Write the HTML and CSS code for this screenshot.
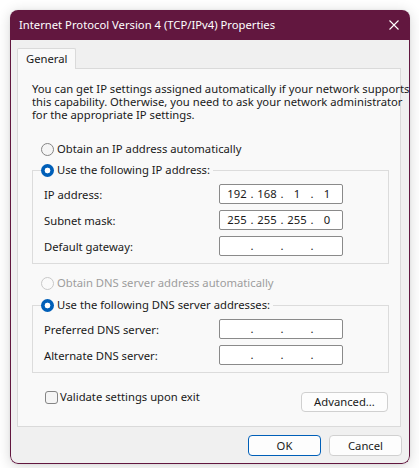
FILE: index.html
```html
<!DOCTYPE html>
<html>
<head>
<meta charset="utf-8">
<link rel="stylesheet" href="styles.css">
</head>
<body>
<div class="window">
  <div class="titlebar">
    <span class="title">Internet Protocol Version 4 (TCP/IPv4) Properties</span>
    <svg class="close" width="10" height="10" viewBox="0 0 10 10"><path d="M0.5 0.5L9.5 9.5M9.5 0.5L0.5 9.5" stroke="#fff" stroke-width="1.1" fill="none"/></svg>
  </div>
  <div class="client">
    <div class="tabs"><div class="tab">General</div></div>
    <div class="panel">
      <p class="intro">You can get IP settings assigned automatically if your network supports<br>this capability. Otherwise, you need to ask your network administrator<br>for the appropriate IP settings.</p>
      <label class="radio top-radio"><span class="rb"></span>Obtain an IP address automatically</label>
      <fieldset class="group g1">
        <legend><label class="radio"><span class="rb on"></span>Use the following IP address:</label></legend>
        <div class="row"><span>IP address:</span><div class="ip"><span class="seg">192</span><span class="dot">.</span><span class="seg">168</span><span class="dot">.</span><span class="seg">1</span><span class="dot">.</span><span class="seg">1</span></div></div>
        <div class="row"><span>Subnet mask:</span><div class="ip"><span class="seg">255</span><span class="dot">.</span><span class="seg">255</span><span class="dot">.</span><span class="seg">255</span><span class="dot">.</span><span class="seg">0</span></div></div>
        <div class="row"><span>Default gateway:</span><div class="ip"><span class="seg"></span><span class="dot">.</span><span class="seg"></span><span class="dot">.</span><span class="seg"></span><span class="dot">.</span><span class="seg"></span></div></div>
      </fieldset>
      <label class="radio dns-radio disabled"><span class="rb"></span>Obtain DNS server address automatically</label>
      <fieldset class="group g2">
        <legend><label class="radio"><span class="rb on"></span>Use the following DNS server addresses:</label></legend>
        <div class="row"><span>Preferred DNS server:</span><div class="ip"><span class="seg"></span><span class="dot">.</span><span class="seg"></span><span class="dot">.</span><span class="seg"></span><span class="dot">.</span><span class="seg"></span></div></div>
        <div class="row"><span>Alternate DNS server:</span><div class="ip"><span class="seg"></span><span class="dot">.</span><span class="seg"></span><span class="dot">.</span><span class="seg"></span><span class="dot">.</span><span class="seg"></span></div></div>
      </fieldset>
      <div class="bottom-row">
        <label class="check"><span class="cb"></span>Validate settings upon exit</label>
        <button class="btn advanced">Advanced...</button>
      </div>
    </div>
    <div class="footer">
      <button class="btn ok">OK</button>
      <button class="btn cancel">Cancel</button>
    </div>
  </div>
</div>
</body>
</html>
```
FILE: styles.css
```css
* { box-sizing: border-box; }
html, body { margin: 0; padding: 0; }
body {
  background: #ffffff;
  font-family: "Noto Sans", "Open Sans", sans-serif;
  font-size: 11.25px;
  color: #1a1a1a;
  width: 419px;
  height: 468px;
  overflow: hidden;
}
.window {
  margin: 10px 0 0 10px;
  width: 400px;
  height: 454px;
  border-radius: 8px;
  overflow: hidden;
  box-shadow: 0 2px 14px rgba(0,0,0,0.16), 0 0 2px rgba(0,0,0,0.1);
  display: flex;
  flex-direction: column;
}
.titlebar {
  height: 30px;
  flex: none;
  background: #62173f;
  color: #fff;
  display: flex;
  align-items: center;
  justify-content: space-between;
  padding: 0 11px 0 9px;
}
.title { font-size: 11.25px; line-height: 16px; }
.close { display: block; }
.client {
  flex: 1;
  background: #f0f0f0;
  border: 1px solid #62173f;
  border-top: none;
  border-radius: 0 0 8px 8px;
  padding: 8px 8px 0 6px;
  display: flex;
  flex-direction: column;
}
.tabs { display: flex; }
.tab {
  position: relative;
  z-index: 1;
  height: 21px;
  margin-bottom: -1px;
  padding: 0 8px;
  background: #f9f9f9;
  border: 1px solid #dadada;
  border-bottom: none;
  line-height: 19px;
  border-radius: 2px 2px 0 0;
}
.panel {
  height: 359px;
  background: #f9f9f9;
  border: 1px solid #dadada;
  padding: 13px 11px 14px 14px;
  display: flex;
  flex-direction: column;
  align-items: flex-start;
}
.intro {
  margin: 0;
  line-height: 13px;
  white-space: nowrap;
}
.radio {
  display: flex;
  align-items: center;
  height: 16px;
  line-height: 16px;
  white-space: nowrap;
}
.top-radio { margin: 20px 0 0 9px; }
.dns-radio { margin: 11px 0 0 9px; }
.rb {
  width: 13px;
  height: 13px;
  border-radius: 50%;
  border: 1px solid #858585;
  background: #f5f5f5;
  margin-right: 3px;
  flex: none;
}
.rb.on {
  border: none;
  background: radial-gradient(circle, #ffffff 0 2.6px, #005fb8 3.2px);
}
.disabled { color: #9d9d9d; }
.disabled .rb { border-color: #c8c8c8; background: #fafafa; }
.group {
  width: 357px;
  margin: 0;
  border: 1px solid #dcdcdc;
  padding: 6px 45px 7px 11px;
  display: flex;
  flex-direction: column;
  gap: 6px;
}
.g1 { margin-top: 5px; }
.g2 { margin-top: 6px; padding-top: 6px; }
.group legend {
  padding: 0 3px 0 0;
  margin-left: -3px;
}
.row {
  display: flex;
  justify-content: space-between;
  align-items: center;
  height: 20px;
}
.ip {
  width: 124px;
  height: 20px;
  background: #fff;
  border: 1px solid #8a8a8a;
  border-radius: 2px;
  display: flex;
  align-items: center;
  padding-left: 4px;
  line-height: 16px;
}
.seg { width: 26px; text-align: center; }
.dot { width: 4px; text-align: center; }
.bottom-row {
  margin-top: 16px;
  width: 100%;
  display: flex;
  justify-content: space-between;
  align-items: flex-start;
  padding: 0 1px 0 13px;
}
.check {
  display: flex;
  align-items: center;
  height: 16px;
  line-height: 16px;
}
.cb {
  width: 13px;
  height: 13px;
  border: 1px solid #858585;
  border-radius: 3px;
  background: #f5f5f5;
  margin-right: 2px;
}
.btn {
  font-family: inherit;
  font-size: 11.25px;
  color: #1a1a1a;
  background: #fdfdfd;
  border: 1px solid #d0d0d0;
  border-radius: 4px;
  height: 21px;
  padding: 0;
  line-height: 18px;
}
.advanced { width: 87px; height: 20px; margin-top: 3px; }
.footer {
  display: flex;
  justify-content: flex-end;
  gap: 8px;
  padding: 8px 0 0 0;
  margin-right: -1px;
}
.ok, .cancel { width: 73px; }
.ok { border-color: #005fb8; }
```
